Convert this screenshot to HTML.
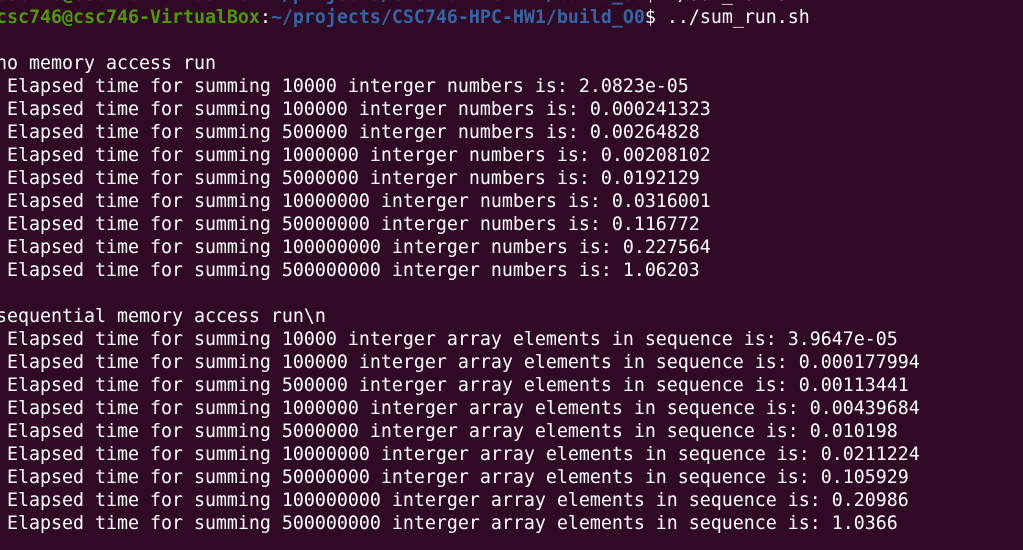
<!DOCTYPE html>
<html><head><meta charset="utf-8"><style>
html,body{margin:0;padding:0;background:#300a24;width:1023px;height:550px;overflow:hidden}
pre{position:absolute;left:-4px;top:-17.5px;margin:0;font-family:"DejaVu Sans Mono","Liberation Mono",monospace;font-size:18.28px;line-height:23px;color:#ffffff;white-space:pre}
.g{color:#4e9a06;font-weight:bold}.b{color:#3465a4;font-weight:bold}
</style></head><body><pre><span class="g">csc746@csc746-VirtualBox</span>:<span class="b">~/projects/CSC746-HPC-HW1/build_O0</span>$ ./sum_run.sh
<span class="g">csc746@csc746-VirtualBox</span>:<span class="b">~/projects/CSC746-HPC-HW1/build_O0</span>$ ../sum_run.sh

no memory access run
 Elapsed time for summing 10000 interger numbers is: 2.0823e-05
 Elapsed time for summing 100000 interger numbers is: 0.000241323
 Elapsed time for summing 500000 interger numbers is: 0.00264828
 Elapsed time for summing 1000000 interger numbers is: 0.00208102
 Elapsed time for summing 5000000 interger numbers is: 0.0192129
 Elapsed time for summing 10000000 interger numbers is: 0.0316001
 Elapsed time for summing 50000000 interger numbers is: 0.116772
 Elapsed time for summing 100000000 interger numbers is: 0.227564
 Elapsed time for summing 500000000 interger numbers is: 1.06203

sequential memory access run\n
 Elapsed time for summing 10000 interger array elements in sequence is: 3.9647e-05
 Elapsed time for summing 100000 interger array elements in sequence is: 0.000177994
 Elapsed time for summing 500000 interger array elements in sequence is: 0.00113441
 Elapsed time for summing 1000000 interger array elements in sequence is: 0.00439684
 Elapsed time for summing 5000000 interger array elements in sequence is: 0.010198
 Elapsed time for summing 10000000 interger array elements in sequence is: 0.0211224
 Elapsed time for summing 50000000 interger array elements in sequence is: 0.105929
 Elapsed time for summing 100000000 interger array elements in sequence is: 0.20986
 Elapsed time for summing 500000000 interger array elements in sequence is: 1.0366
</pre></body></html>
